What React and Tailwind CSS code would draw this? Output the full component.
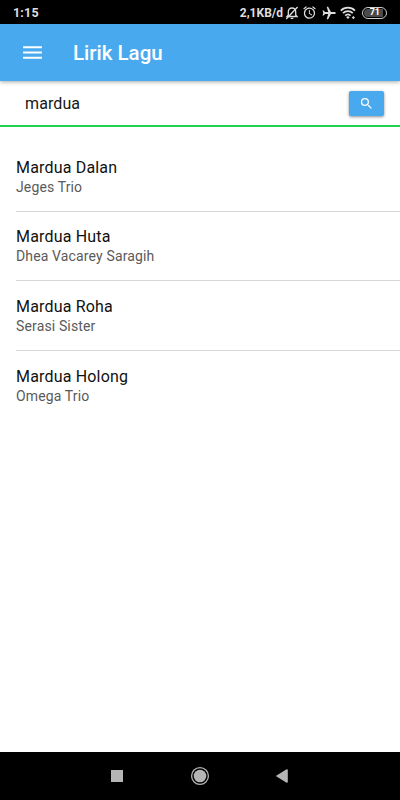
import React from "react";
import { MdAlarm, MdMenu, MdSearch } from "react-icons/md";

const songs = [
  { title: "Mardua Dalan", artist: "Jeges Trio" },
  { title: "Mardua Huta", artist: "Dhea Vacarey Saragih" },
  { title: "Mardua Roha", artist: "Serasi Sister" },
  { title: "Mardua Holong", artist: "Omega Trio" },
];

function MutedBellIcon() {
  return (
    <svg width="14" height="14" viewBox="0 0 14 14" fill="none" stroke="currentColor" strokeWidth="1.3">
      <path d="M2 10.5h10L10.7 9V5.800C10.700 3.600 9.200 2 7 2S3.300 3.600 3.300 5.800V9z" />
      <path d="M5.700 12.300h2.600M12.600 1L1.200 13" />
    </svg>
  );
}

function PlaneIcon() {
  return (
    <svg width="14" height="14" viewBox="0 0 14 14" fill="currentColor">
      <path d="M13.8 7c0-.7-.6-1.1-1.3-1.1H9L6.1.8H4.7l1.5 5.1H3L1.7 4.4H.5L1.3 7 .5 9.6h1.2L3 8.1h3.2l-1.5 5.1h1.4L9 8.1h3.5c.7 0 1.3-.4 1.3-1.1z" />
    </svg>
  );
}

function WifiIcon() {
  return (
    <svg width="16" height="14" viewBox="0 0 16 14" fill="none" stroke="currentColor" strokeWidth="1.8">
      <path d="M0.8 4.6a10.2 10.2 0 0 1 14.2 0" />
      <path d="M3 7.2a7 7 0 0 1 9.8 0" />
      <path d="M5.2 9.6a4 4 0 0 1 5.4 0" />
      <path d="M6.2 11.2a2.4 2.4 0 0 1 3.4 0L7.9 13z" fill="currentColor" stroke="none" />
      <path d="M13.4 10l1.5 1.6-1.5 1.6-1.5-1.6z" fill="currentColor" stroke="none" />
    </svg>
  );
}

function StatusBar() {
  return (
    <div className="flex h-6 shrink-0 items-center bg-black pt-px pr-[13px] pl-[13px] text-[#dedede]">
      <span className="pt-px text-[12.5px] font-bold tracking-[0.2px]">1:15</span>
      <div className="ml-auto flex items-center">
        <span className="text-[12px] font-bold">2,1KB/d</span>
        <span className="ml-[2px]"><MutedBellIcon /></span>
        <MdAlarm className="ml-[3px] size-[15px]" />
        <span className="ml-[5px]"><PlaneIcon /></span>
        <span className="ml-1"><WifiIcon /></span>
        <span className="ml-[6px] flex h-3 w-[25px] items-center rounded-full border-[1.5px] border-[#cfcfcf] p-px">
          <span className="flex h-2 w-[19px] items-center justify-end rounded-l-full bg-[#4a4a4a] pr-[3px] text-[9px] leading-none font-bold text-white">
            71
          </span>
        </span>
      </div>
    </div>
  );
}

function NavBar() {
  return (
    <div className="flex h-12 shrink-0 items-center justify-center bg-black">
      <svg width="200" height="24" viewBox="0 0 200 24" fill="#b5b5b5">
        <rect x="11" y="6" width="12" height="12" />
        <circle cx="100" cy="12" r="8.4" fill="none" stroke="#b5b5b5" strokeWidth="1.3" />
        <circle cx="100" cy="12" r="6.3" />
        <path d="M175.8 12l10.4-6.6a1 1 0 0 1 1.6.8v11.6a1 1 0 0 1-1.6.8z" />
      </svg>
    </div>
  );
}

export default function App() {
  return (
    <div className="flex h-[800px] w-[400px] flex-col overflow-hidden bg-white font-['Roboto',sans-serif]">
      <StatusBar />

      <header className="z-10 flex h-[57px] shrink-0 items-center bg-[#49a9ee] pl-5 text-white shadow-[0_1px_4px_rgba(0,0,0,0.35)]">
        <MdMenu className="size-[25px]" />
        <h1 className="ml-7 pt-px text-[20.5px] font-medium">Lirik Lagu</h1>
      </header>

      {/* search */}
      <div className="flex h-[46px] shrink-0 items-center border-b-2 border-[#22d052] pr-4 pl-[25px]">
        <input
          defaultValue="mardua"
          className="min-w-0 flex-1 bg-transparent pt-0.5 text-[16px] tracking-[0.1px] text-[#161616] outline-none"
        />
        <button className="mt-px flex h-[25px] w-[35px] items-center justify-center rounded-[2px] bg-[#49a9ee] text-white shadow-[0_1px_3px_rgba(0,0,0,0.45)]">
          <MdSearch className="size-[15px]" />
        </button>
      </div>

      {/* results */}
      <ul className="flex-1 pt-[15px] pl-4">
        {songs.map((s, i) => (
          <li
            key={s.title}
            className={[
              "flex h-[69.6px] flex-col border-b pt-[15.9px]",
              i < songs.length - 1 ? "border-[#d8d8d8]" : "border-transparent",
            ].join(" ")}
          >
            <span className="text-[16px] leading-5 tracking-[0.18px] text-[#111]">{s.title}</span>
            <span className="text-[14px] leading-[18.8px] tracking-[0.14px] text-[#5a5a5a]">{s.artist}</span>
          </li>
        ))}
      </ul>

      <NavBar />
    </div>
  );
}
